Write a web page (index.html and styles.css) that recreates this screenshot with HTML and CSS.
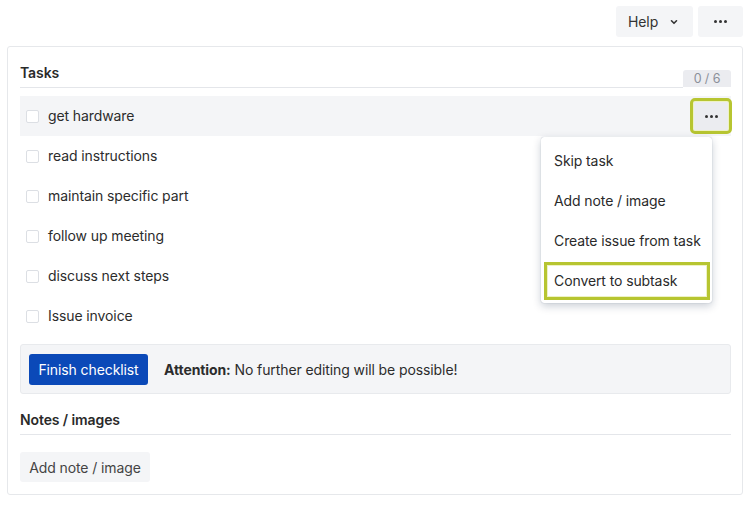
FILE: index.html
```html
<!DOCTYPE html>
<html>
<head>
<meta charset="utf-8">
<link rel="stylesheet" href="styles.css">
</head>
<body>
<div class="topbar">
  <button class="tbtn help">Help
    <svg class="chev" width="10" height="10" viewBox="0 0 10 10"><path d="M2.5 3.8 L5 6.3 L7.5 3.8" fill="none" stroke="#333" stroke-width="1.6" stroke-linecap="round" stroke-linejoin="round"/></svg>
  </button>
  <button class="tbtn dots"><span class="dot3"><i></i><i></i><i></i></span></button>
</div>
<div class="card">
  <div class="sec-head">
    <div class="sec-title">Tasks</div>
    <div class="badge">0 / 6</div>
  </div>
  <div class="tasks">
    <div class="row active">
      <span class="cb"></span><span class="label">get hardware</span>
      <button class="rowbtn"><span class="dot3"><i></i><i></i><i></i></span></button>
      <div class="menu">
        <div class="mi">Skip task</div>
        <div class="mi">Add note / image</div>
        <div class="mi">Create issue from task</div>
        <div class="mi hl">Convert to subtask</div>
      </div>
    </div>
    <div class="row"><span class="cb"></span><span class="label">read instructions</span></div>
    <div class="row"><span class="cb"></span><span class="label">maintain specific part</span></div>
    <div class="row"><span class="cb"></span><span class="label">follow up meeting</span></div>
    <div class="row"><span class="cb"></span><span class="label">discuss next steps</span></div>
    <div class="row"><span class="cb"></span><span class="label">Issue invoice</span></div>
  </div>
  <div class="finish">
    <button class="primary">Finish checklist</button>
    <span class="attn"><b>Attention:</b> No further editing will be possible!</span>
  </div>
  <div class="sec-head notes">
    <div class="sec-title">Notes / images</div>
  </div>
  <button class="addnote">Add note / image</button>
</div>
</body>
</html>
```
FILE: styles.css
```css
* { box-sizing: border-box; }
body {
  margin: 0;
  width: 751px;
  height: 509px;
  background: #fff;
  font-family: Inter, "Noto Sans", "Liberation Sans", sans-serif;
  font-size: 14px;
  letter-spacing: -0.1px;
  color: #2c2c2c;
  overflow: hidden;
}
button { font-family: inherit; font-size: 14px; letter-spacing: -0.1px; border: 0; cursor: pointer; }
.topbar {
  display: flex;
  justify-content: flex-end;
  gap: 5px;
  padding: 6px 8px 0 0;
  height: 46px;
}
.tbtn {
  height: 31px;
  background: #f4f5f7;
  border-radius: 3px;
  color: #333;
  display: flex;
  align-items: center;
  justify-content: center;
}
.help { width: 77px; justify-content: flex-start; padding: 0 0 0 12px; gap: 11px; }
.chev { margin-top: 1px; }
.dots { width: 45px; }
.dot3 { display: flex; gap: 2px; }
.dot3 i { width: 3px; height: 3px; border-radius: 50%; background: #333; display: block; }
.card {
  margin: 0 8px 0 7px;
  height: 449px;
  border: 1px solid #e6e8eb;
  border-radius: 3px;
  padding: 16px 11px 12px 12px;
}
.sec-head { display: flex; align-items: flex-end; }
.sec-title {
  flex: 1;
  font-weight: 600;
  line-height: 20px;
  padding-bottom: 4px;
  border-bottom: 1px solid #e4e6ea;
  color: #2a2a2a;
}
.badge {
  width: 48px;
  height: 17px;
  background: #ebecf0;
  color: #8b9099;
  font-size: 12.5px;
  line-height: 18px;
  text-align: center;
  border-radius: 3px 3px 0 0;
  margin-bottom: 1px;
}
.tasks { margin-top: 8px; }
.row {
  position: relative;
  height: 40px;
  display: flex;
  align-items: center;
  padding: 0 2px 0 6px;
}
.row.active { background: #f4f5f7; }
.cb {
  width: 13px;
  height: 13px;
  border: 1px solid #dcdfe4;
  border-radius: 2px;
  background: #fff;
  margin-right: 9px;
  margin-top: 1px;
}
.label { flex: 1; line-height: 20px; margin-top: -1px; }
.rowbtn {
  width: 36px;
  height: 30px;
  background: #ebecf0;
  border-radius: 2px;
  display: flex;
  align-items: center;
  justify-content: center;
  outline: 3px solid #b7c531;
  box-shadow: 0 0 0 1px #eef2c4 inset;
}
.menu {
  position: absolute;
  top: 41px;
  right: 19px;
  width: 171px;
  background: #fff;
  border-radius: 3px;
  box-shadow: 0 3px 8px rgba(9,30,66,.22), 0 0 1px rgba(9,30,66,.35);
  padding: 4px 0 2px;
  z-index: 5;
}
.mi {
  height: 40px;
  line-height: 40px;
  padding-left: 13px;
  color: #2a2a2a;
}
.mi.hl {
  margin: 1px 2px 1px 3px;
  height: 38px;
  line-height: 32px;
  border: 3px solid #b7c531;
  box-shadow: 0 0 0 1px #eef2c4 inset;
  padding-left: 7px;
}
.finish {
  margin-top: 8px;
  height: 50px;
  background: #f4f5f7;
  border: 1px solid #e8eaed;
  border-radius: 3px;
  display: flex;
  align-items: center;
  padding: 0 8px;
  gap: 16px;
}
.primary {
  height: 31px;
  width: 119px;
  background: #0b49b8;
  color: #fff;
  border-radius: 3px;
}
.attn b { font-weight: 700; }
.notes { margin-top: 16px; }
.addnote {
  margin-top: 17px;
  height: 30px;
  width: 130px;
  background: #f4f5f7;
  color: #444;
  border-radius: 3px;
}
```
